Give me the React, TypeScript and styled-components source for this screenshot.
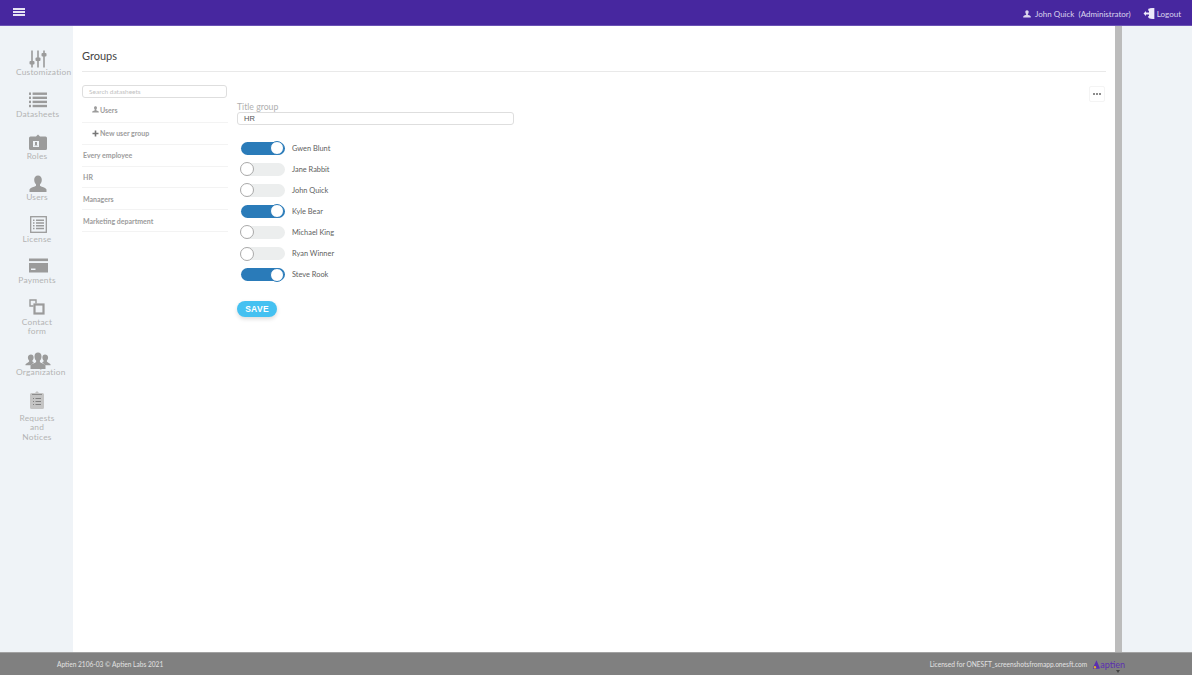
import React from "react";
import styled, { createGlobalStyle } from "styled-components";

const GlobalStyle = createGlobalStyle`
  html, body {
    margin: 0;
    padding: 0;
    background: #fff;
    overflow: hidden;
  }
  * {
    box-sizing: border-box;
  }
`;

const Page = styled.div`
  width: 1200px;
  height: 675px;
  padding-right: 8px;
  display: flex;
  flex-direction: column;
  font-family: Lato, "Open Sans", sans-serif;
`;

const TopBar = styled.header`
  height: 26px;
  flex: none;
  display: flex;
  align-items: center;
  justify-content: space-between;
  padding: 2px 11px 0 13px;
  background: #47279f;
  border-bottom: 1px solid #6a52b4;
  color: #dcd6ee;
  font-size: 8px;
`;

const MenuButton = styled.div`
  width: 12px;
  display: flex;
  flex-direction: column;
  gap: 1.6px;
  margin-top: -3px;

  span {
    height: 1.4px;
    background: #e6e2f3;
  }
`;

const TopActions = styled.div`
  display: flex;
  align-items: center;
`;

const TopAction = styled.span`
  display: flex;
  align-items: center;
  gap: 2px;
  margin-left: 12px;
  white-space: pre;
`;

const Middle = styled.div`
  flex: 1;
  display: flex;
  min-height: 0;
`;

const Sidebar = styled.nav`
  width: 73px;
  flex: none;
  padding: 24px 0 0 16px;
  background: #eff3f7;
`;

const NavItem = styled.div`
  width: 42px;
  padding-bottom: 13.9px;
  text-align: center;
`;

const NavIcon = styled.div<{ $height?: number; $top?: number; $shift?: number }>`
  height: ${(p) => p.$height ?? 18.4}px;
  width: 44px;
  padding-top: ${(p) => p.$top ?? 0}px;
  padding-right: ${(p) => p.$shift ?? 0}px;
  display: flex;
  justify-content: center;
  align-items: flex-start;
  color: #9b9b9b;
`;

const NavLabel = styled.div`
  font-size: 8.4px;
  line-height: 9.3px;
  letter-spacing: 0.2px;
  color: #b4b4b4;
  white-space: pre-line;
`;

const Content = styled.main`
  width: 1042px;
  flex: none;
  padding: 0 9px;
`;

const PageHead = styled.div`
  height: 46px;
  padding-top: 22px;
  border-bottom: 1px solid #e9e9e9;
`;

const PageTitle = styled.h1`
  margin: 0;
  font-size: 11px;
  line-height: 16px;
  font-weight: 400;
  color: #444;
`;

const Columns = styled.div`
  display: flex;
  padding-top: 13px;
`;

const ListColumn = styled.div`
  width: 146px;
  flex: none;
`;

const SearchBox = styled.div`
  width: 145px;
  height: 13px;
  padding-left: 6px;
  border: 1px solid #dedede;
  border-radius: 3px;
  font-size: 6.5px;
  line-height: 11px;
  color: #c2c2c2;
`;

const ListRow = styled.div<{ $height: number; $indent?: boolean }>`
  height: ${(p) => p.$height}px;
  display: flex;
  align-items: center;
  gap: 1px;
  padding-left: ${(p) => (p.$indent ? 10 : 1)}px;
  border-bottom: 1px solid #f3f3f3;
  font-size: 7px;
  font-weight: 700;
  color: #9c9c9c;
`;

const FormColumn = styled.div`
  flex: 1;
  padding: 17px 0 0 9px;
`;

const FieldLabel = styled.label`
  display: block;
  font-size: 8.7px;
  line-height: 10px;
  color: #b0b0b0;
`;

const TextField = styled.div`
  width: 277px;
  height: 13px;
  padding-left: 6px;
  border: 1px solid #dedede;
  border-radius: 3px;
  font-family: "Liberation Sans", Arial, sans-serif;
  font-size: 7.5px;
  line-height: 11px;
  color: #555;
`;

const Members = styled.div`
  margin-top: 12.5px;
  padding-left: 4px;
`;

const MemberRow = styled.div`
  height: 21.1px;
  display: flex;
  align-items: center;
  gap: 7px;
  font-size: 7.4px;
  color: #5e5e5e;
`;

const Track = styled.div<{ $on: boolean }>`
  width: 44px;
  height: 13px;
  flex: none;
  display: flex;
  align-items: center;
  justify-content: ${(p) => (p.$on ? "flex-end" : "flex-start")};
  border-radius: 7px;
  background: ${(p) => (p.$on ? "#2a7bb9" : "#eceeee")};
`;

const Knob = styled.div<{ $on: boolean }>`
  width: 14px;
  height: 14px;
  flex: none;
  margin: ${(p) => (p.$on ? "0 1px 0 0" : "0 0 0 -1px")};
  border-radius: 50%;
  background: #fff;
  border: 1px solid ${(p) => (p.$on ? "#2a7bb9" : "#a9a9a9")};
`;

const SaveButton = styled.button`
  display: block;
  width: 40px;
  height: 15.5px;
  margin-top: 16px;
  padding: 0;
  border: 0;
  border-radius: 8px;
  background: #45c1f1;
  box-shadow: 0 2px 4px rgba(0, 0, 0, 0.14);
  color: #fff;
  font-family: "Liberation Sans", Arial, sans-serif;
  font-size: 8.5px;
  font-weight: 700;
  letter-spacing: 0.3px;
`;

const MoreButton = styled.div`
  width: 16px;
  height: 16px;
  flex: none;
  margin: 1px 1px 0 0;
  display: flex;
  align-items: center;
  justify-content: center;
  gap: 1px;
  border: 1px solid #f4f4f4;
  border-radius: 2px;

  i {
    width: 2px;
    height: 2px;
    border-radius: 50%;
    background: #666;
  }
`;

const Scrollbar = styled.div`
  width: 7px;
  flex: none;
  background: #bcbcbc;
`;

const Gutter = styled.div`
  flex: 1;
  background: #eff3f7;
`;

const Footer = styled.footer`
  height: 23px;
  flex: none;
  position: relative;
  display: flex;
  align-items: center;
  justify-content: space-between;
  padding: 0 67px 0 57px;
  background: #808080;
  border-top: 1px solid #a2a2a2;
  color: #e2e2e2;
  font-size: 6.6px;
`;

const License = styled.div`
  display: flex;
  align-items: center;
  gap: 6px;
`;

const Brand = styled.span`
  display: flex;
  align-items: center;
  gap: 0;
  font-family: Lato, sans-serif;
  font-size: 9px;
  color: #5b2fb0;
`;

const ScrollArrow = styled.span`
  position: absolute;
  left: 1116px;
  bottom: 2px;
  border-top: 3px solid #444;
  border-left: 2px solid transparent;
  border-right: 2px solid transparent;
`;

const SlidersIcon = () => (
  <svg width="18" height="18" viewBox="0 0 18 18" fill="currentColor">
    <rect x="2.2" y="0.5" width="1.6" height="17" />
    <rect x="8.2" y="0.5" width="1.6" height="17" />
    <rect x="14.2" y="0.5" width="1.6" height="17" />
    <rect x="0.5" y="11" width="5" height="3.6" rx="1" />
    <rect x="6.5" y="7.5" width="5" height="3.6" rx="1" />
    <rect x="12.5" y="3" width="5" height="3.6" rx="1" />
  </svg>
);

const ListIcon = () => (
  <svg width="18" height="17" viewBox="0 0 18 17" fill="currentColor">
    {[0.5, 4.6, 8.7, 12.8].map((y) => (
      <g key={y}>
        <rect x="0" y={y} width="2" height="2.4" />
        <rect x="3.6" y={y} width="14.4" height="2.4" />
      </g>
    ))}
  </svg>
);

const BadgeIcon = () => (
  <svg width="18" height="16" viewBox="0 0 18 16" fill="currentColor">
    <path
      fillRule="evenodd"
      d="M1.5 2.5H7L9 0.5l2 2h5.5A1.5 1.5 0 0 1 18 4v10.5a1.5 1.5 0 0 1-1.5 1.5h-15A1.5 1.5 0 0 1 0 14.5V4a1.5 1.5 0 0 1 1.5-1.5zM4 7v6h6V7zM5.5 11.5h3V12h-3zM6 8h2v3H6z"
    />
  </svg>
);

const PersonIcon = ({ size = 18 }: { size?: number }) => (
  <svg width={size} height={size} viewBox="0 0 18 18" fill="currentColor">
    <path d="M9 0.5c2.3 0 3.8 1.7 3.8 4.2 0 2-.8 3.5-1.8 4.5v1.6c0 .8 5.5 1.6 6.5 3.6V17H.5v-2.6c1-2 6.500-2.800 6.500-3.600V9.200C6 8.200 5.200 6.700 5.200 4.700 5.200 2.200 6.700.5 9 .5z" />
  </svg>
);

const LicenseIcon = () => (
  <svg width="17" height="17" viewBox="0 0 17 17" fill="none" stroke="currentColor">
    <rect x="0.7" y="0.7" width="15.600" height="15.600" strokeWidth="1.300" />
    <path d="M3 4.200h1.500M6 4.200h8M3 7h1.500M6 7h8M3 9.800h1.500M6 9.800h8M3 12.600h1.500M6 12.600h8" strokeWidth="1.500" />
  </svg>
);

const CardIcon = () => (
  <svg width="19" height="15" viewBox="0 0 19 15" fill="currentColor">
    <rect x="0" y="0.500" width="19" height="2.600" />
    <path d="M0 5h19v9.500H0zM2 10.500v1.500h4.500v-1.500z" fillRule="evenodd" />
  </svg>
);

const CopyIcon = () => (
  <svg width="16" height="16" viewBox="0 0 16 16" fill="none" stroke="currentColor">
    <path d="M7 4.500V1H1v6h3.500" strokeWidth="1.400" />
    <rect x="5.500" y="5.500" width="9" height="9" strokeWidth="2.200" />
  </svg>
);

const GroupIcon = () => (
  <svg width="26" height="17" viewBox="0 0 26 17" fill="currentColor">
    <path d="M6 2.500c1.600 0 2.600 1.300 2.600 3 0 1.300-.6 2.400-1.200 3v1l1.500.8-3 3H0.500v-1c.8-1.400 3.600-2 3.600-2.800v-1c-.6-.6-1.200-1.700-1.200-3 0-1.700 1.500-3 3.100-3z" />
    <path d="M20 2.500c-1.600 0-2.600 1.300-2.600 3 0 1.300.6 2.400 1.200 3v1l-1.500.8 3 3h5.400v-1c-.8-1.400-3.600-2-3.600-2.800v-1c.6-.6 1.200-1.700 1.200-3 0-1.700-1.500-3-3.100-3z" />
    <path d="M13 0.500c2.200 0 3.500 1.700 3.500 3.900 0 1.800-.8 3.300-1.600 4.100v1.500c0 .8 4.400 1.400 5.600 3.500v3.500h-15V13.500c1.200-2.100 5.600-2.700 5.600-3.500V8.500c-.8-.8-1.600-2.300-1.600-4.100C9.500 2.200 10.800.5 13 .5z" />
  </svg>
);

const ClipboardIcon = () => (
  <svg width="14" height="18" viewBox="0 0 14 18" fill="#c4c4c4">
    <path d="M1.500 2H5L7 0l2 2h3.500A1.500 1.500 0 0 1 14 3.500v13a1.500 1.500 0 0 1-1.500 1.500h-11A1.500 1.500 0 0 1 0 16.500v-13A1.500 1.500 0 0 1 1.500 2z" />
    <path d="M3 7h1v1H3zM5.500 7H11v1H5.500zM3 10h1v1H3zM5.500 10H11v1H5.500zM3 13h1v1H3zM5.500 13H11v1H5.500z" fill="#808080" />
    <path d="M2 3.500h10" stroke="#8d8d8d" />
  </svg>
);

const PlusIcon = () => (
  <svg width="7" height="7" viewBox="0 0 7 7" fill="#777">
    <path d="M2.700.5h1.600v2.200h2.200v1.600H4.300v2.200H2.700V4.300H.5V2.700h2.200z" />
  </svg>
);

const LogoutIcon = () => (
  <svg width="12" height="11" viewBox="0 0 12 11" fill="none" stroke="#eeeafa">
    <path d="M6 1.300 10.800 .6v9.800L6 9.700M6 1.300h-.2v1.500M5.800 8v1.700" strokeWidth="1.100" />
    <path d="M6.500 1 10.500.600v9.800l-4-.700z" fill="#eeeafa" />
    <path d="M.5 5.500 3 3v1.500h3.500v2H3V8z" fill="#eeeafa" stroke="none" />
  </svg>
);

const BrandMark = () => (
  <svg width="7" height="9" viewBox="0 0 9 11">
    <path d="M4.500 0 8.500 9.500a1 1 0 0 1-1 1.500H1a1 1 0 0 1-1-1.500z" fill="#5b2fb0" />
    <circle cx="2.500" cy="9" r="1.500" fill="#e0b12a" />
  </svg>
);

const navItems = [
  { label: "Customization", icon: <SlidersIcon /> },
  { label: "Datasheets", icon: <ListIcon /> },
  { label: "Roles", icon: <BadgeIcon />, top: 1 },
  { label: "Users", icon: <PersonIcon /> },
  { label: "License", icon: <LicenseIcon /> },
  { label: "Payments", icon: <CardIcon /> },
  { label: "Contact\nform", icon: <CopyIcon />, shift: 2 },
  { label: "Organization", icon: <GroupIcon />, top: 2, height: 17.4 },
  { label: "Requests\nand\nNotices", icon: <ClipboardIcon />, height: 23, shift: 2 },
];

const groups = [
  { name: "Every employee", height: 21.5 },
  { name: "HR", height: 21.5 },
  { name: "Managers", height: 22 },
  { name: "Marketing department", height: 22 },
];

const members = [
  { name: "Gwen Blunt", on: true },
  { name: "Jane Rabbit", on: false },
  { name: "John Quick", on: false },
  { name: "Kyle Bear", on: true },
  { name: "Michael King", on: false },
  { name: "Ryan Winner", on: false },
  { name: "Steve Rook", on: true },
];

export default function App() {
  return (
    <Page>
      <GlobalStyle />
      <TopBar>
        <MenuButton>
          <span />
          <span />
          <span />
        </MenuButton>
        <TopActions>
          <TopAction>
            <PersonIcon size={8} />
            {" John Quick  (Administrator)"}
          </TopAction>
          <TopAction>
            <LogoutIcon />
            Logout
          </TopAction>
        </TopActions>
      </TopBar>

      <Middle>
        <Sidebar>
          {navItems.map((item) => (
            <NavItem key={item.label}>
              <NavIcon $height={item.height} $top={item.top} $shift={item.shift}>
                {item.icon}
              </NavIcon>
              <NavLabel>{item.label}</NavLabel>
            </NavItem>
          ))}
        </Sidebar>

        <Content>
          <PageHead>
            <PageTitle>Groups</PageTitle>
          </PageHead>
          <Columns>
            <ListColumn>
              <SearchBox>Search datasheets</SearchBox>
              <ListRow $height={24.5} $indent>
                <PersonIcon size={7} />
                Users
              </ListRow>
              <ListRow $height={22.5} $indent>
                <PlusIcon />
                New user group
              </ListRow>
              {groups.map((group) => (
                <ListRow key={group.name} $height={group.height}>
                  {group.name}
                </ListRow>
              ))}
            </ListColumn>

            <FormColumn>
              <FieldLabel>Title group</FieldLabel>
              <TextField>HR</TextField>
              <Members>
                {members.map((member) => (
                  <MemberRow key={member.name}>
                    <Track $on={member.on}>
                      <Knob $on={member.on} />
                    </Track>
                    {member.name}
                  </MemberRow>
                ))}
              </Members>
              <SaveButton>SAVE</SaveButton>
            </FormColumn>

            <MoreButton>
              <i />
              <i />
              <i />
            </MoreButton>
          </Columns>
        </Content>

        <Scrollbar />
        <Gutter />
      </Middle>

      <Footer>
        <span>Aptien 2106-03 © Aptien Labs 2021</span>
        <License>
          Licensed for ONESFT_screenshotsfromapp.onesft.com
          <Brand>
            <BrandMark />
            aptien
          </Brand>
        </License>
        <ScrollArrow />
      </Footer>
    </Page>
  );
}
